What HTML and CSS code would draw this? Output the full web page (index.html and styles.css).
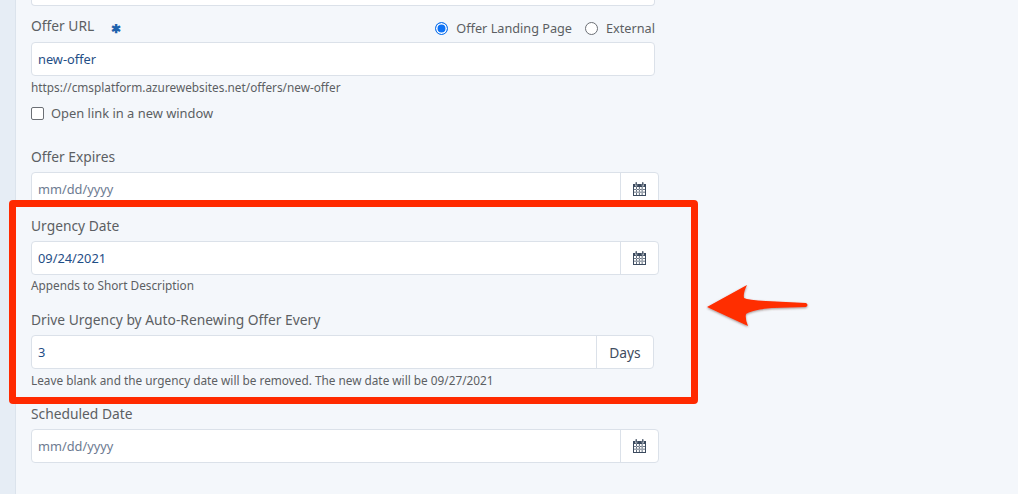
FILE: index.html
```html
<!DOCTYPE html>
<html lang="en">
<head>
<meta charset="utf-8">
<title>Offer settings</title>
<link rel="stylesheet" href="styles.css">
</head>
<body>
<svg class="sprite" width="0" height="0" aria-hidden="true">
  <symbol id="cal" viewBox="0 0 13 14">
    <path fill="#3b4a5e" fill-rule="evenodd" d="M0 2h2.2V3.6a1 1 0 0 0 2 0V2h4.6v1.6a1 1 0 0 0 2 0V2H13v12H0ZM1 5v8h11V5Zm2.2 0h.8v8h-.8Zm2.7 0h.8v8h-.8Zm2.8 0h.8v8h-.8ZM1 7.2h11V8H1Zm0 2.6h11v.8H1Z"/>
    <path fill="none" stroke="#3b4a5e" stroke-width=".8" d="M2.9.4h.6v3h-.6Zm6.6 0h.6v3h-.6Z"/>
  </symbol>
</svg>
<div class="page">
  <main class="panel">
    <div class="stub"></div>

    <div class="url-head">
      <div class="label-wrap"><label class="label">Offer URL</label><span class="req">✱</span></div>
      <div class="radios">
        <span class="radio radio-on"></span><span class="radio-text">Offer Landing Page</span>
        <span class="radio"></span><span class="radio-text">External</span>
      </div>
    </div>
    <div class="box w-url"><span class="value">new-offer</span></div>
    <p class="hint hint-url">https://cmsplatform.azurewebsites.net/offers/new-offer</p>
    <div class="check-row"><span class="check"></span><span class="check-text">Open link in a new window</span></div>

    <label class="label label-expires">Offer Expires</label>
    <div class="box w-date">
      <span class="value muted">mm/dd/yyyy</span>
      <span class="addon"><svg class="cal"><use href="#cal"/></svg></span>
    </div>

    <label class="label label-urgency">Urgency Date</label>
    <div class="box w-date">
      <span class="value">09/24/2021</span>
      <span class="addon"><svg class="cal"><use href="#cal"/></svg></span>
    </div>
    <p class="hint hint-urgency">Appends to Short Description</p>

    <label class="label label-drive">Drive Urgency by Auto-Renewing Offer Every</label>
    <div class="box w-days">
      <span class="value">3</span>
      <span class="addon addon-days">Days</span>
    </div>
    <p class="hint hint-days">Leave blank and the urgency date will be removed. The new date will be 09/27/2021</p>

    <label class="label label-scheduled">Scheduled Date</label>
    <div class="box w-date">
      <span class="value muted">mm/dd/yyyy</span>
      <span class="addon"><svg class="cal"><use href="#cal"/></svg></span>
    </div>
  </main>

  <div class="callout"></div>
  <svg class="arrow" viewBox="0 0 104 46" width="104" height="46" aria-hidden="true">
    <defs><filter id="sh" x="-10%" y="-10%" width="120%" height="130%"><feDropShadow dx="0" dy="1" stdDeviation=".8" flood-color="#5a3a30" flood-opacity=".55"/></filter></defs>
    <path filter="url(#sh)" fill="#ff2d00" d="M1 22 L41 0 Q37 8 38 13 Q42 15 60 16 L100 18 Q103 20 100 22 L66 23 Q44 25 40 29 Q39 34 42 41 Z"/>
  </svg>
</div>
</body>
</html>
```
FILE: styles.css
```css
* { box-sizing: border-box; }
html, body { margin: 0; padding: 0; }
body {
  width: 1018px;
  height: 494px;
  overflow: hidden;
  background: #f4f7fb;
  font-family: "Noto Sans", "Open Sans", sans-serif;
  color: #5c5f63;
}
.sprite { position: absolute; }
.page { position: relative; height: 494px; background: #e6edf5; padding-left: 15px; }
.panel {
  height: 494px;
  background: #f4f7fb;
  border-left: 1px solid #dbe3ec;
  padding-left: 15px;
}
.stub {
  width: 624px;
  height: 6px;
  background: #fff;
  border: 1px solid #dbe1e9;
  border-top: 0;
  border-radius: 0 0 4px 4px;
}
.url-head {
  width: 624px;
  height: 36px;
  display: flex;
  justify-content: space-between;
  align-items: center;
  padding-top: 8px;
}
.label-wrap { display: flex; align-items: flex-start; margin-top: -2px; }
.label { display: block; font-size: 13.8px; line-height: 20px; color: #5c5f63; }
.req { color: #1f62ad; font-size: 12px; font-weight: 700; line-height: 20px; margin: 3px 0 0 17px; }
.radios { display: flex; align-items: center; font-size: 12.7px; line-height: 18px; }
.radio {
  width: 13px;
  height: 13px;
  border: 1px solid #6b6f75;
  border-radius: 50%;
  background: #fff;
  margin-right: 8px;
}
.radio-on { border: 1px solid #1273eb; box-shadow: inset 0 0 0 1.5px #fff; background: #0f73f5; }
.radio-text { margin-right: 13px; color: #5c5f63; }
.radio-text:last-child { margin-right: 0; }
.box {
  display: flex;
  align-items: stretch;
  height: 34px;
  background: #fff;
  border: 1px solid #dbe1e9;
  border-radius: 4px;
}
.w-url { width: 624px; }
.w-date { width: 628px; }
.w-days { width: 623px; }
.value {
  flex: 1;
  padding-left: 6px;
  font-size: 12.8px;
  line-height: 32px;
  color: #1f4e86;
}
.muted { color: #6d7b91; }
.addon {
  width: 38px;
  display: flex;
  align-items: center;
  justify-content: center;
  border-left: 1px solid #dbe1e9;
}
.addon-days {
  width: 57px;
  font-size: 13.8px;
  color: #3f4c60;
}
.cal { width: 13px; height: 14px; }
.hint { margin: 0; font-size: 11.8px; line-height: 16px; color: #5c5f63; }
.hint-url { margin-top: 3px; }
.check-row { display: flex; align-items: center; height: 20px; margin-top: 8px; }
.check {
  width: 13px;
  height: 13px;
  background: #fff;
  border: 1px solid #6b6f75;
  border-radius: 2px;
  margin-right: 7px;
}
.check-text { font-size: 12.9px; color: #5c5f63; }
.label-expires { margin-top: 24px; margin-bottom: 5px; }
.label-urgency { margin-top: 10px; margin-bottom: 5px; }
.hint-urgency { margin-top: 2px; }
.label-drive { margin-top: 17px; margin-bottom: 5px; }
.hint-days { margin-top: 3px; }
.label-scheduled { margin-top: 16px; margin-bottom: 5px; }
.callout {
  position: absolute;
  left: 9px;
  top: 200px;
  width: 689px;
  height: 204px;
  border: 7px solid #ff2a00;
  border-radius: 4px;
}
.arrow { position: absolute; left: 706px; top: 285px; }
```
